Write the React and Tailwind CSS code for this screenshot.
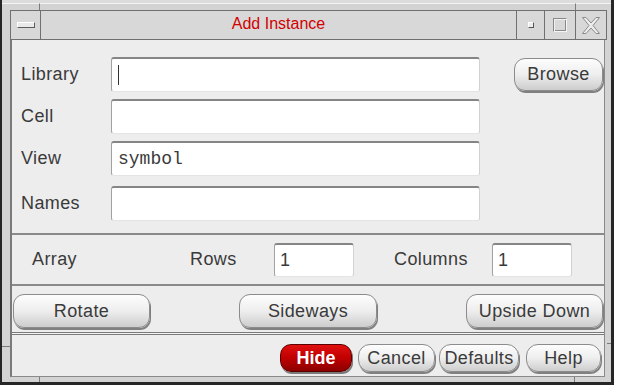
const sans = "font-['Liberation_Sans',Arial,sans-serif]";

function Field({ className = "", children }) {
  return (
    <div
      className={`flex items-center bg-white rounded-[3px] border-t-2 border-t-[#858585] border-l border-l-[#a2a2a2] border-r border-r-[#d2d2d2] border-b border-b-[#e4e4e4] ${className}`}
    >
      {children}
    </div>
  );
}

function Btn({ className = "", children }) {
  return (
    <div
      className={`flex items-center justify-center rounded-[11px] border border-[#8c8c8c] bg-linear-to-b from-[#fdfdfd] via-[#eeeeee] to-[#cdcdcd] shadow-[1px_2px_0_#808080] text-[18px] tracking-[0.4px] text-[#3a3a3a] ${className}`}
    >
      {children}
    </div>
  );
}

function Label({ className = "", children }) {
  return <span className={`text-[18px] tracking-[0.4px] text-[#3a3a3a] ${className}`}>{children}</span>;
}

export default function App() {
  return (
    <div className={`w-[617px] h-[387px] bg-white ${sans}`}>
      <div className="w-[614px] h-[385px] flex flex-col bg-[#d3d3d3] border-l-2 border-r-[3px] border-b-[3px] border-[#262626]">
        {/* top frame strip */}
        <div className="h-[10px] flex border-t-[3px] border-t-[#dcdcdc]">
          <div className="w-[38px] border-r border-[#7c7c7c] border-t border-t-[#f4f4f4]" />
          <div className="flex-1 border-t border-t-[#f4f4f4]" />
          <div className="w-[36px] border-l border-[#7c7c7c] border-t border-t-[#f4f4f4]" />
        </div>

        <div className="flex flex-1">
          {/* left frame */}
          <div className="w-[8px] flex flex-col">
            <div className="h-[337px] border-b border-[#7c7c7c]" />
            <div className="flex-1" />
          </div>

          <div className="w-[597px] flex flex-col">
            {/* title bar */}
            <div className="h-[30px] flex bg-[#d8d8d8] border border-[#707070]">
              <div className="w-[30px] flex items-center justify-center border-r border-[#707070]">
                <div className="w-[18px] h-[6px] bg-[#e9e9e9] border border-t-white border-l-white border-r-[#5c5c5c] border-b-[#5c5c5c]" />
              </div>
              <div className="flex-1 flex items-center justify-center text-[16px] text-[#d20000] pb-[2px]">
                Add Instance
              </div>
              <div className="w-[28px] flex items-center justify-center border-l border-[#707070]">
                <div className="w-[6px] h-[6px] bg-[#ececec] border border-t-white border-l-white border-r-[#555] border-b-[#555]" />
              </div>
              <div className="w-[31px] flex items-center justify-center border-l border-[#707070]">
                <div className="w-[14px] h-[14px] border border-t-[#888] border-l-[#888] border-r-[#f5f5f5] border-b-[#f5f5f5] shadow-[inset_1px_1px_0_#f0f0f0,inset_-1px_-1px_0_#8a8a8a]" />
              </div>
              <div className="w-[31px] flex items-center justify-center border-l border-[#707070]">
                <svg width="20" height="19" viewBox="0 0 20 19">
                  <path
                    d="M1.5 1.5 H5 L10 7 L15 1.5 H18.5 L12 9.5 L18.5 17.5 H15 L10 12 L5 17.5 H1.5 L8 9.5 Z"
                    fill="#ececec"
                    stroke="#8c8c8c"
                    strokeWidth="1"
                  />
                </svg>
              </div>
            </div>

            {/* content */}
            <div className="flex-1 mr-[2px] flex flex-col bg-[#ededed] border-l-2 border-l-[#7a7a7a] border-r border-r-[#8a8a8a] border-b border-b-[#8a8a8a]">
              {/* fields */}
              <div className="h-[193px] flex pt-[17px] pl-[9px]">
                <div className="flex flex-col">
                  {[
                    ["Library", "cursor", "mt-0"],
                    ["Cell", "", "mt-[7px]"],
                    ["View", "symbol", "mt-[7px]"],
                    ["Names", "", "mt-[10px]"],
                  ].map(([label, value, mt]) => (
                    <div key={label} className={`flex items-center ${mt}`}>
                      <Label className="w-[90px]">{label}</Label>
                      <Field className="w-[369px] h-[35px] px-[6px]">
                        {value === "cursor" && <span className="w-px h-[20px] bg-[#333]" />}
                        {value === "symbol" && (
                          <span className="font-['Liberation_Mono','Courier_New',monospace] text-[18px] text-[#3a3a3a]">
                            symbol
                          </span>
                        )}
                      </Field>
                    </div>
                  ))}
                </div>
                <Btn className="ml-[34px] mt-px w-[89px] h-[33px]">Browse</Btn>
              </div>

              <div className="h-[2px] bg-[#8a8a8a]" />

              {/* array row */}
              <div className="h-[49px] flex items-center pl-[20px]">
                <Label className="w-[158px]">Array</Label>
                <Label className="w-[84px]">Rows</Label>
                <Field className="w-[80px] h-[34px] px-[5px]">
                  <span className="text-[18px] text-[#3a3a3a]">1</span>
                </Field>
                <Label className="ml-[40px] w-[98px]">Columns</Label>
                <Field className="w-[80px] h-[34px] px-[5px]">
                  <span className="text-[18px] text-[#3a3a3a]">1</span>
                </Field>
              </div>

              <div className="h-[2px] bg-[#8a8a8a]" />

              {/* orientation buttons */}
              <div className="h-[46px] flex items-start justify-between pt-[8px] pl-px pr-px">
                <Btn className="w-[137px] h-[34px]">Rotate</Btn>
                <Btn className="w-[138px] h-[34px]">Sideways</Btn>
                <Btn className="w-[137px] h-[34px]">Upside Down</Btn>
              </div>

              <div className="h-[3px] border-y border-[#7a7a7a] bg-[#f4f4f4]" />

              {/* bottom buttons */}
              <div className="flex-1 flex items-start justify-end pt-[9px] pr-[3px]">
                <div className="w-[72px] h-[28px] flex items-center justify-center rounded-[11px] border border-[#5a0000] bg-linear-to-b from-[#e01010] via-[#c00000] to-[#8c0000] shadow-[1px_2px_0_#7a7a7a] text-[18px] font-bold text-white">
                  Hide
                </div>
                <Btn className="ml-[6px] w-[77px] h-[28px] rounded-[12px]">Cancel</Btn>
                <Btn className="ml-[4px] w-[80px] h-[28px] rounded-[12px]">Defaults</Btn>
                <Btn className="ml-[7px] w-[75px] h-[28px] rounded-[12px]">Help</Btn>
              </div>
            </div>
          </div>

          {/* right frame */}
          <div className="flex-1 flex flex-col">
            <div className="h-[334px] border-b border-[#7c7c7c]" />
            <div className="flex-1" />
          </div>
        </div>

        {/* bottom frame strip */}
        <div className="h-[5px] flex">
          <div className="w-[38px] border-r border-[#7c7c7c]" />
          <div className="flex-1" />
          <div className="w-[37px] border-l border-[#7c7c7c]" />
        </div>
      </div>
    </div>
  );
}
